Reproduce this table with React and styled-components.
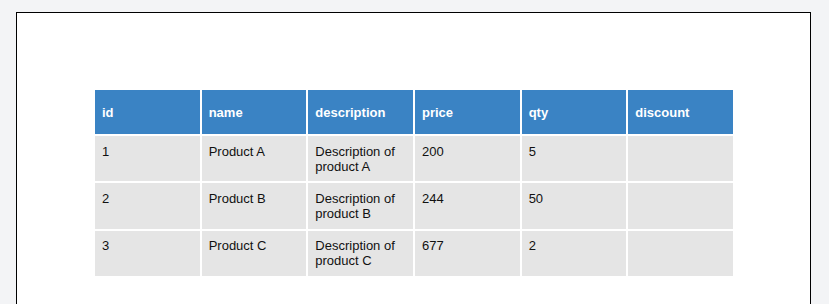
import React from 'react';
import styled, { createGlobalStyle } from 'styled-components';

const GlobalStyle = createGlobalStyle`
  * {
    box-sizing: border-box;
  }

  body {
    margin: 0;
    background: #f3f4f6;
    font-family: 'Liberation Sans', Arial, sans-serif;
  }
`;

const Frame = styled.div`
  margin: 12px 18px 0 16px;
  min-height: 330px;
  padding-top: 75px;
  border: 1px solid #000;
  background: #fff;
`;

const Table = styled.table`
  width: 642px;
  margin: 0 0 0 76px;
  table-layout: fixed;
  border-collapse: separate;
  border-spacing: 2px;
  font-size: 13px;
  line-height: 15px;
`;

const HeadCell = styled.th`
  height: 44px;
  padding: 0 6px 0 7px;
  text-align: left;
  vertical-align: middle;
  font-weight: bold;
  color: #fff;
  background: #3a83c4;
`;

const Cell = styled.td`
  padding: 7.7px 6px 7.6px 7px;
  vertical-align: top;
  color: #111;
  background: #e5e5e5;
`;

const columns = ['id', 'name', 'description', 'price', 'qty', 'discount'];

const rows = [
  { id: 1, name: 'Product A', description: 'Description of product A', price: 200, qty: 5, discount: '' },
  { id: 2, name: 'Product B', description: 'Description of product B', price: 244, qty: 50, discount: '' },
  { id: 3, name: 'Product C', description: 'Description of product C', price: 677, qty: 2, discount: '' },
];

const App = () => {
  return (
    <>
      <GlobalStyle />
      <Frame>
        <Table>
          <thead>
            <tr>
              {columns.map((col) => (
                <HeadCell key={col}>{col}</HeadCell>
              ))}
            </tr>
          </thead>
          <tbody>
            {rows.map((row) => (
              <tr key={row.id}>
                {columns.map((col) => (
                  <Cell key={col}>{row[col]}</Cell>
                ))}
              </tr>
            ))}
          </tbody>
        </Table>
      </Frame>
    </>
  );
};

export default App;
